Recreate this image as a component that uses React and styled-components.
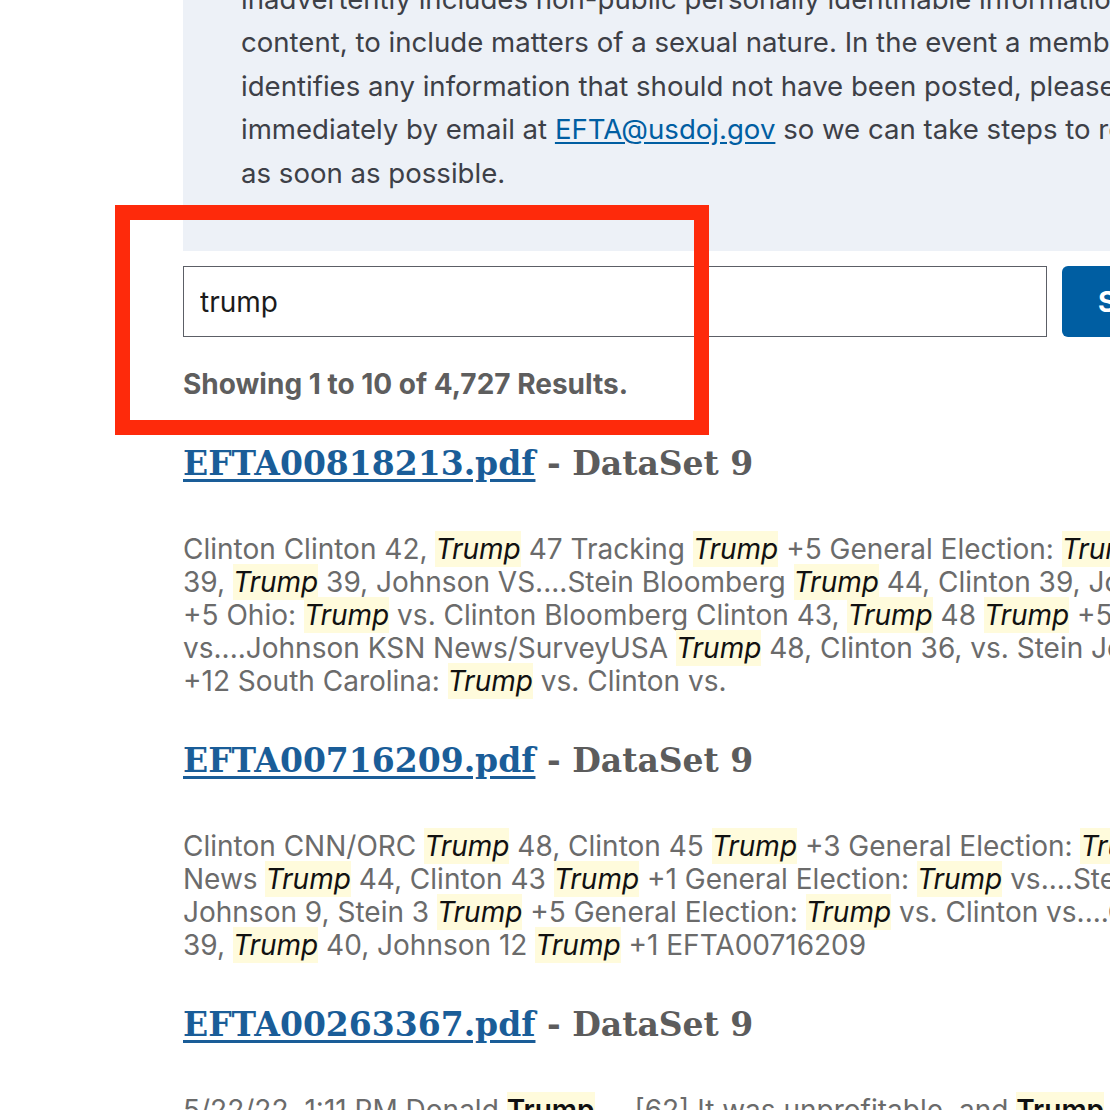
import styled, { createGlobalStyle } from "styled-components";

const GlobalStyle = createGlobalStyle`
  html, body {
    margin: 0;
    padding: 0;
    background: #ffffff;
    overflow: hidden;
  }
  body {
    font-family: "Inter", "Open Sans", sans-serif;
  }
`;

const results = [
  {
    file: "EFTA00818213.pdf",
    dataset: "DataSet 9",
    lines: [
      ["Clinton Clinton 42, ", "*", " 47 Tracking ", "*", " +5 General Election: ", "*", " vs. Clinton"],
      ["39, ", "*", " 39, Johnson VS....Stein Bloomberg ", "*", " 44, Clinton 39, Johnson 8"],
      ["+5 Ohio: ", "*", " vs. Clinton Bloomberg Clinton 43, ", "*", " 48 ", "*", " +5 Iowa:"],
      ["vs....Johnson KSN News/SurveyUSA ", "*", " 48, Clinton 36, vs. Stein Johnson 5"],
      ["+12 South Carolina: ", "*", " vs. Clinton vs."],
    ],
  },
  {
    file: "EFTA00716209.pdf",
    dataset: "DataSet 9",
    lines: [
      ["Clinton CNN/ORC ", "*", " 48, Clinton 45 ", "*", " +3 General Election: ", "*", " vs. Clinton"],
      ["News ", "*", " 44, Clinton 43 ", "*", " +1 General Election: ", "*", " vs....Stein Fox"],
      ["Johnson 9, Stein 3 ", "*", " +5 General Election: ", "*", " vs. Clinton vs....Clinton"],
      ["39, ", "*", " 40, Johnson 12 ", "*", " +1 EFTA00716209"],
    ],
  },
  {
    file: "EFTA00263367.pdf",
    dataset: "DataSet 9",
    upright: true,
    lines: [["5/22/22, 1:11 PM Donald ", "*", " ... [62] It was unprofitable, and ", "*", " lost"]],
  },
];

function Notice() {
  const lines = [
    "inadvertently includes non-public personally identifiable information or other sensitive",
    "content, to include matters of a sexual nature. In the event a member of the public",
    "identifies any information that should not have been posted, please contact us",
    null,
    "as soon as possible.",
  ];
  return (
    <NoticePanel>
      {lines.map((line, i) =>
        line ? (
          <NoticeLine key={i}>{line}</NoticeLine>
        ) : (
          <NoticeLine key={i}>
            immediately by email at <NoticeLink href="#">EFTA@usdoj.gov</NoticeLink> so we can
            take steps to remove it
          </NoticeLine>
        )
      )}
    </NoticePanel>
  );
}

export default function App() {
  return (
    <>
      <GlobalStyle />
      <Page>
        <Notice />

        <SearchRow>
          <SearchInput type="text" defaultValue="trump" />
          <SearchButton type="button">Search</SearchButton>
        </SearchRow>

        <ResultCount>Showing 1 to 10 of 4,727 Results.</ResultCount>

        {results.map((r) => (
          <Result key={r.file}>
            <ResultTitle>
              <TitleLink href="#">{r.file}</TitleLink> - {r.dataset}
            </ResultTitle>
            <Snippet>
              {r.lines.map((parts, i) => (
                <SnippetLine key={i}>
                  {parts.map((p, j) =>
                    p === "*" ? (
                      <Hit key={j} $upright={r.upright}>
                        Trump
                      </Hit>
                    ) : (
                      <span key={j}>{p}</span>
                    )
                  )}
                </SnippetLine>
              ))}
            </Snippet>
          </Result>
        ))}

        <Annotation />
      </Page>
    </>
  );
}

const Page = styled.div`
  position: relative;
  width: 1300px;
  padding-left: 183px;
  margin-top: -22px;
  box-sizing: border-box;
`;

const NoticePanel = styled.div`
  background: #edf1f7;
  padding: 0 0 56px 58px;
`;

const NoticeLine = styled.div`
  font-size: 27.6px;
  line-height: 43.4px;
  color: #3d4047;
  white-space: nowrap;
`;

const NoticeLink = styled.a`
  color: #005ea2;
  text-decoration: underline;
  text-underline-offset: 3px;
`;

const SearchRow = styled.div`
  display: flex;
  gap: 15px;
  margin-top: 15px;
`;

const SearchInput = styled.input`
  width: 864px;
  height: 71px;
  box-sizing: border-box;
  border: 1px solid #5c5f66;
  padding: 0 16px;
  font-family: inherit;
  font-size: 28px;
  color: #1b1b1b;
  outline: none;
`;

const SearchButton = styled.button`
  height: 71px;
  padding: 0 36px;
  border: none;
  border-radius: 6px;
  background: #005ea2;
  color: #ffffff;
  font-family: inherit;
  font-size: 28px;
  font-weight: 700;
`;

const ResultCount = styled.div`
  margin-top: 27px;
  font-size: 28px;
  line-height: 40px;
  font-weight: 700;
  color: #5e5e5e;
`;

const Result = styled.div`
  margin-top: 38px;
  & + & {
    margin-top: 41px;
  }
`;

const ResultTitle = styled.h3`
  margin: 0 0 47px;
  font-family: "DejaVu Serif", serif;
  font-size: 33px;
  line-height: 44px;
  font-weight: 700;
  color: #5c5c5c;
  white-space: nowrap;
`;

const TitleLink = styled.a`
  color: #1a5d98;
  text-decoration: underline;
  text-underline-offset: 4px;
`;

const Snippet = styled.div`
  font-size: 28px;
  line-height: 33px;
  color: #6b6b6b;
`;

const SnippetLine = styled.div`
  white-space: nowrap;
`;

const Hit = styled.mark`
  background: #fffbdc;
  color: #111111;
  font-style: ${({ $upright }) => ($upright ? "normal" : "italic")};
  font-weight: ${({ $upright }) => ($upright ? 600 : 400)};
  padding: 1px 0;
`;

const Annotation = styled.div`
  position: absolute;
  left: 115px;
  top: 227px;
  width: 594px;
  height: 230px;
  box-sizing: border-box;
  border: 15px solid #fe2a0b;
  pointer-events: none;
`;
